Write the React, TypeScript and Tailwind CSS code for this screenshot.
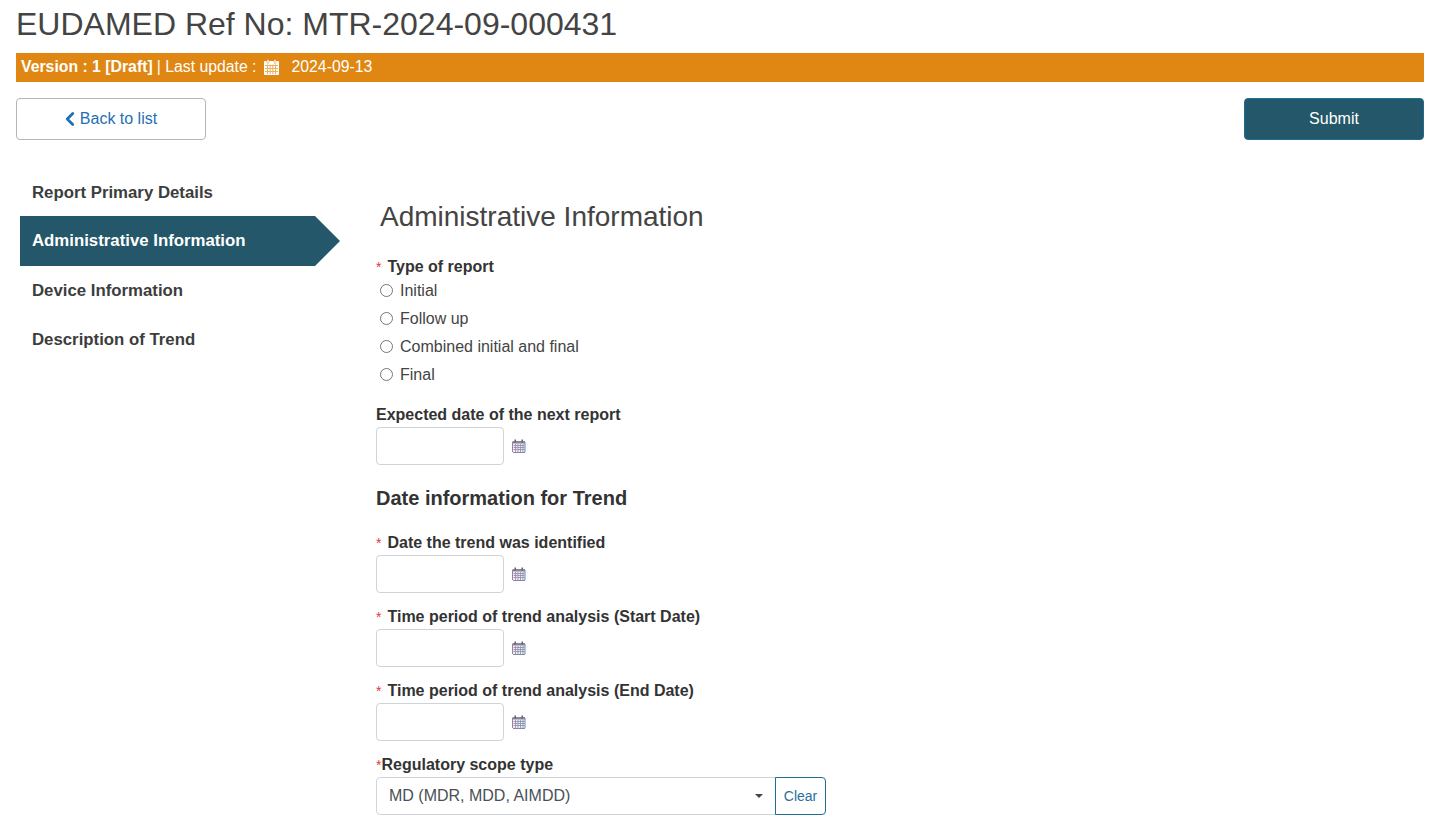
import React from 'react'
import { ChevronLeft } from 'lucide-react'

// multicolour calendar picker used next to the date inputs
function PickerIcon() {
  return (
    <svg width="14" height="14" viewBox="0 0 14 14" className="shrink-0">
      <rect x="0.5" y="2" width="12.500" height="11.500" rx="1" fill="#f1eff0" />
      <path d="M0.500 3v10" stroke="#b0789c" />
      <path d="M13 3v10" stroke="#6d90c0" />
      <path d="M1 13.500h12" stroke="#7f8aa5" />
      <rect x="0.500" y="2" width="12.500" height="2.500" fill="#8f8599" />
      <rect x="2.500" y="0.500" width="1.500" height="3" fill="#5d6276" />
      <rect x="9.500" y="0.500" width="1.500" height="3" fill="#5d6276" />
      <path d="M1.500 6.500h11M1.500 8.500h11M1.500 10.500h11" stroke="#8496b8" strokeWidth="0.9" />
      <path d="M3.500 5v8M6 5v8M8.500 5v8M11 5v8" stroke="#9a92ae" strokeWidth="0.9" />
    </svg>
  )
}

function BannerCalendar() {
  return (
    <svg width="15" height="16" viewBox="0 0 15 16" className="shrink-0">
      <rect x="0" y="2" width="15" height="14" rx="1" fill="#fff" />
      <rect x="3" y="0.500" width="2" height="4" rx="1" fill="#fff" stroke="#df8712" strokeWidth="0.5" />
      <rect x="10" y="0.500" width="2" height="4" rx="1" fill="#fff" stroke="#df8712" strokeWidth="0.5" />
      <path
        d="M1 6.500h13M1 9.500h13M1 12.500h13M3.500 5.500v9.500M6.200 5.500v9.500M8.800 5.500v9.500M11.500 5.500v9.500"
        stroke="#eeb061"
        strokeWidth="1"
      />
    </svg>
  )
}

function Required({ gap = 'mr-[6px]' }: { gap?: string }) {
  return <span className={`text-[#e53935] font-normal text-sm ${gap}`}>*</span>
}

function DateField({ label, required, top }: { label: string; required?: boolean; top: string }) {
  return (
    <div className={top}>
      <div className="text-base font-bold leading-[20px] h-[20px] text-[#333]">
        {required && <Required />}
        {label}
      </div>
      <div className="flex items-center gap-2 mt-[2px]">
        <div className="w-[128px] h-[38px] bg-white border border-[#ced4da] rounded" />
        <PickerIcon />
      </div>
    </div>
  )
}

const reportTypes = ['Initial', 'Follow up', 'Combined initial and final', 'Final']

export default function App() {
  return (
    <div className="h-[826px] overflow-hidden bg-white pl-4 pr-[14px] text-[#333] font-['Liberation_Sans',Arial,sans-serif]">
      <h1 className="text-[32px] leading-[48px] font-normal text-[#444]">EUDAMED Ref No: MTR-2024-09-000431</h1>

      <div className="mt-[5px] h-[29px] bg-[#df8712] text-white text-[15.8px] flex items-center pl-[5px] pb-[2px]">
        <b>Version : 1 [Draft]</b>
        <span className="ml-[4px]">| Last update :</span>
        <span className="ml-[7px]"><BannerCalendar /></span>
        <span className="ml-[13px]">2024-09-13</span>
      </div>

      <div className="mt-4 flex justify-between">
        <button className="w-[190px] h-[42px] bg-white border border-[#b5b5b5] rounded text-base text-[#1f6fb5] flex items-center justify-center">
          <ChevronLeft size={22} strokeWidth={3} className="-ml-[6px]" />
          <span className="-ml-[1px]">Back to list</span>
        </button>
        <button className="w-[180px] h-[42px] bg-[#235769] border border-[#1f6d94] rounded text-base text-white">
          Submit
        </button>
      </div>

      <div className="flex mt-[27px]">
        <nav className="w-[320px] ml-1 shrink-0 text-[16.8px] font-bold text-[#3d3d3d]">
          <div className="h-[49px] pl-3 pt-[2px] flex items-center">Report Primary Details</div>
          <div className="h-[50px] pl-3 flex items-center text-white bg-[#235769] [clip-path:polygon(0_0,295px_0,100%_50%,295px_100%,0_100%)]">
            Administrative Information
          </div>
          <div className="h-[49px] pl-3 flex items-center">Device Information</div>
          <div className="h-[49px] pl-3 flex items-center">Description of Trend</div>
        </nav>

        <main className="ml-[36px] flex-1">
          <h2 className="ml-1 mt-[30px] text-[28px] leading-[40px] font-normal text-[#444]">Administrative Information</h2>

          <div className="mt-[20px] text-base font-bold leading-[20px] h-[20px] text-[#333]">
            <Required />
            Type of report
          </div>
          <div className="flex flex-col">
            {reportTypes.map(t => (
              <label key={t} className="h-[28px] flex items-center text-base text-[#444]">
                <span className="ml-1 mb-[2px] w-[13px] h-[13px] rounded-full border border-[#767676] bg-white" />
                <span className="ml-[7px]">{t}</span>
              </label>
            ))}
          </div>

          <DateField label="Expected date of the next report" top="mt-[16px]" />

          <h3 className="mt-[19px] text-[20px] leading-[28px] font-bold text-[#333]">Date information for Trend</h3>

          <DateField label="Date the trend was identified" required top="mt-[21px]" />
          <DateField label="Time period of trend analysis (Start Date)" required top="mt-[14px]" />
          <DateField label="Time period of trend analysis (End Date)" required top="mt-[14px]" />

          <div className="mt-[14px]">
            <div className="text-base font-bold leading-[20px] h-[20px] text-[#333]">
              <Required gap="mr-0" />
              Regulatory scope type
            </div>
            <div className="flex mt-[2px] w-[450px] h-[38px]">
              <div className="flex-1 flex items-center justify-between border border-[#ced4da] rounded-l pl-3 pr-3 text-base text-[#495057]">
                <span>MD (MDR, MDD, AIMDD)</span>
                <span className="w-0 h-0 border-x-4 border-x-transparent border-t-4 border-t-[#444]" />
              </div>
              <button className="w-[51px] -ml-px border border-[#1f6d94] rounded-r text-sm text-[#2a6f97]">Clear</button>
            </div>
          </div>
        </main>
      </div>
    </div>
  )
}
